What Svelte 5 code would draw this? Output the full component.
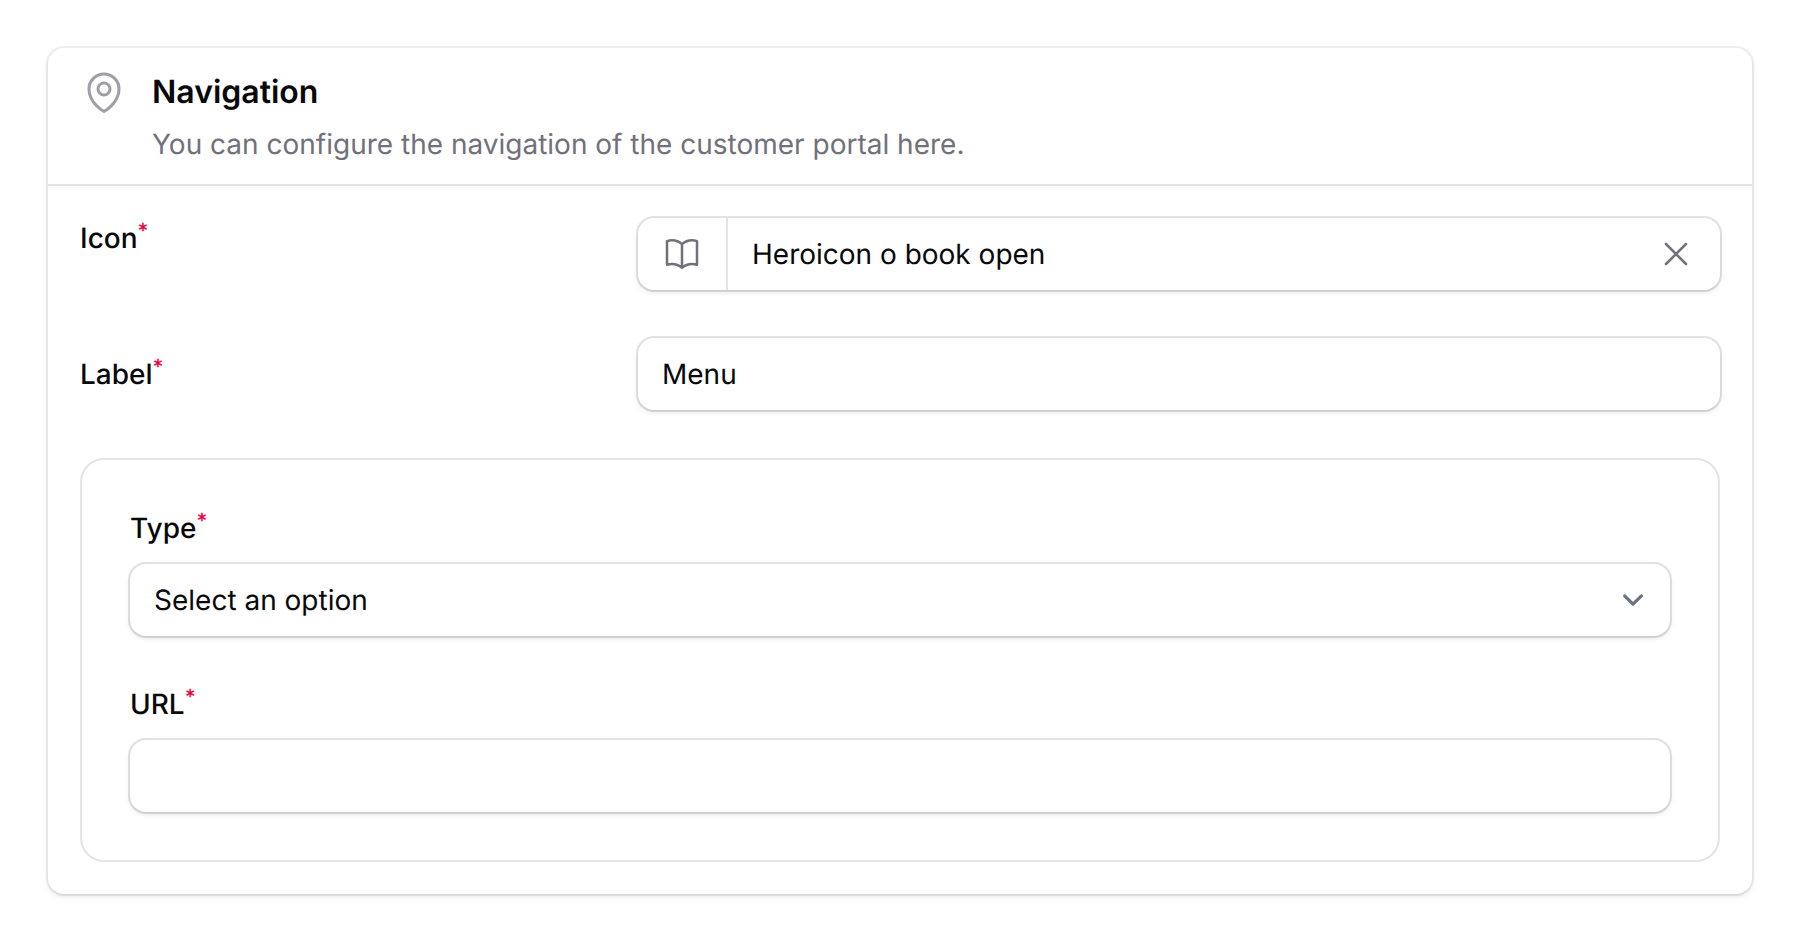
<script>
  let icon = $state('Heroicon o book open');
  let label = $state('Menu');
  let type = $state('');
  let url = $state('');
</script>

<main>
  <section class="card" aria-labelledby="section-title">
    <header>
      <svg class="pin" viewBox="0 0 24 24" aria-hidden="true">
        <path d="M15 10.5a3 3 0 1 1-6 0 3 3 0 0 1 6 0Z" />
        <path d="M19.5 10.5c0 7.142-7.5 11.25-7.5 11.25S4.5 17.642 4.5 10.5a7.5 7.5 0 1 1 15 0Z" />
      </svg>
      <div class="titles">
        <h2 id="section-title">Navigation</h2>
        <p>You can configure the navigation of the customer portal here.</p>
      </div>
    </header>

    <form class="content" onsubmit={(e) => e.preventDefault()}>
      <div class="row">
        <label for="icon">Icon<sup>*</sup></label>
        <div class="control">
          <span class="prefix">
            <svg class="icon" viewBox="0 0 24 24" aria-hidden="true">
              <path d="M12 6.042A8.967 8.967 0 0 0 6 3.75c-1.052 0-2.062.18-3 .512v14.25A8.987 8.987 0 0 1 6 18c2.305 0 4.408.867 6 2.292m0-14.25a8.966 8.966 0 0 1 6-2.292c1.052 0 2.062.18 3 .512v14.25A8.987 8.987 0 0 0 18 18a8.967 8.967 0 0 0-6 2.292m0-14.25v14.25" />
            </svg>
          </span>
          <input id="icon" type="text" bind:value={icon} />
          <button type="button" aria-label="Clear icon" onclick={() => (icon = '')}>
            <svg class="icon" viewBox="0 0 24 24" aria-hidden="true">
              <path d="M6 18 18 6M6 6l12 12" />
            </svg>
          </button>
        </div>
      </div>

      <div class="row centered">
        <label for="label">Label<sup>*</sup></label>
        <div class="control">
          <input id="label" type="text" bind:value={label} />
        </div>
      </div>

      <div class="group">
        <div class="field">
          <label for="type">Type<sup>*</sup></label>
          <div class="control select">
            <select id="type" bind:value={type}>
              <option value="">Select an option</option>
            </select>
            <svg class="chevron" viewBox="0 0 20 20" aria-hidden="true">
              <path d="m6 8 4 4 4-4" />
            </svg>
          </div>
        </div>
        <div class="field">
          <label for="url">URL<sup>*</sup></label>
          <div class="control">
            <input id="url" type="text" bind:value={url} />
          </div>
        </div>
      </div>
    </form>
  </section>
</main>

<style>
  :global(body) {
    margin: 0;
    background: #fff;
  }

  main {
    padding: 48px;
    font-family: Inter, sans-serif;
    font-size: 28px;
    line-height: 40px;
    text-rendering: geometricPrecision;
    color: #09090b;
  }

  .card {
    border-radius: 16px;
    background: #fff;
    box-shadow:
      0 0 0 2px rgb(9 9 11 / 5%),
      0 2px 6px rgb(0 0 0 / 10%),
      0 2px 4px -2px rgb(0 0 0 / 10%);
  }

  header {
    display: flex;
    align-items: flex-start;
    gap: 24px;
    padding: 20px 32px;
  }

  .titles {
    display: grid;
    gap: 8px;
  }

  h2 {
    margin: 0;
    font-size: 32px;
    font-weight: 600;
    line-height: 48px;
  }

  p {
    margin: 0;
    color: #71717b;
  }

  svg {
    flex: none;
    display: block;
    fill: none;
    stroke: currentColor;
    stroke-width: 1.5;
    stroke-linecap: round;
    stroke-linejoin: round;
  }

  .pin {
    width: 48px;
    height: 48px;
    color: #9f9fa9;
  }

  .icon {
    width: 40px;
    height: 40px;
    color: #71717b;
  }

  .content {
    display: grid;
    gap: 48px;
    padding: 32px;
    border-top: 2px solid #e4e4e7;
  }

  .row {
    display: grid;
    grid-template-columns: repeat(3, minmax(0, 1fr));
    gap: 34px;
    align-items: start;
  }

  .centered {
    align-items: center;
  }

  .row .control {
    grid-column: span 2;
  }

  label {
    font-weight: 500;
    justify-self: start;
  }

  sup {
    position: relative;
    top: -0.5em;
    vertical-align: baseline;
    font-size: 21px;
    line-height: 0;
    color: #ec003f;
  }

  .control {
    display: flex;
    border-radius: 16px;
    background: #fff;
    box-shadow:
      0 0 0 2px rgb(9 9 11 / 10%),
      0 2px 6px rgb(0 0 0 / 10%),
      0 2px 4px -2px rgb(0 0 0 / 10%);
  }

  .prefix {
    display: flex;
    align-items: center;
    padding: 0 24px;
    border-right: 2px solid #e4e4e7;
  }

  input,
  select {
    box-sizing: border-box;
    flex: 1;
    min-width: 0;
    height: 72px;
    margin: 0;
    padding: 0 24px;
    border: 0;
    border-radius: 16px;
    outline: 0;
    appearance: none;
    background: transparent;
    font: inherit;
    text-rendering: inherit;
    color: inherit;
  }

  button {
    padding: 0 24px;
    border: 0;
    background: transparent;
    cursor: pointer;
  }

  .select {
    display: grid;
    align-items: center;
  }

  .select > * {
    grid-area: 1 / 1;
  }

  .chevron {
    justify-self: end;
    width: 42px;
    height: 42px;
    margin-right: 16px;
    color: #6b7280;
    pointer-events: none;
  }

  .group {
    display: grid;
    gap: 48px;
    padding: 48px;
    border: 2px solid #e4e4e7;
    border-radius: 24px;
  }

  .field {
    display: grid;
    gap: 16px;
  }
</style>
